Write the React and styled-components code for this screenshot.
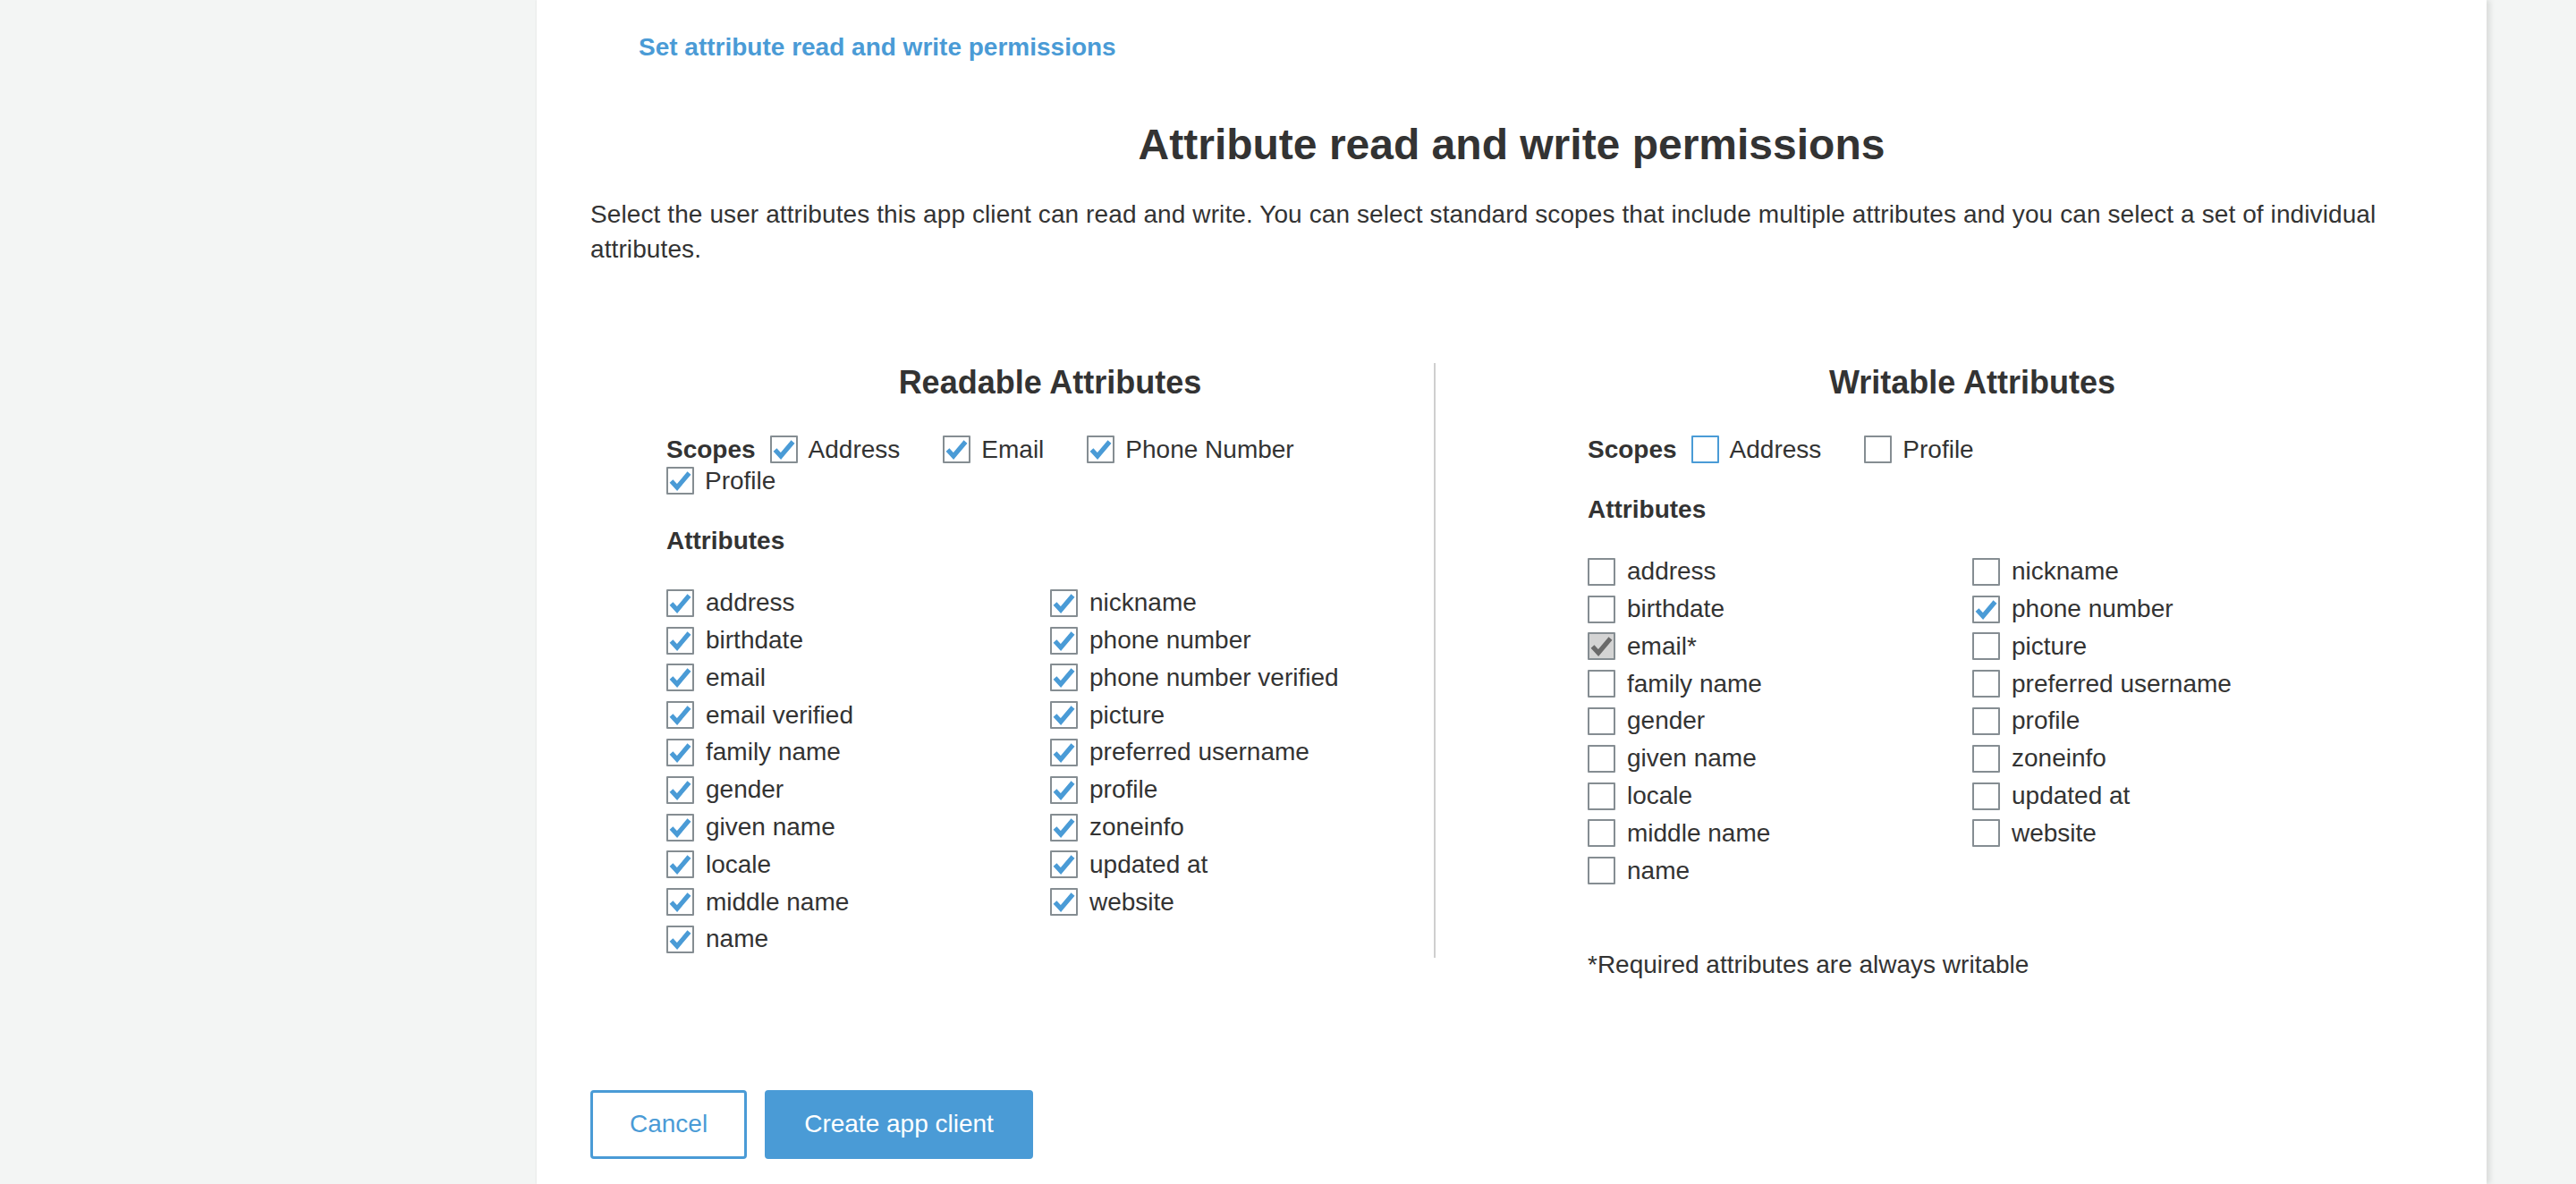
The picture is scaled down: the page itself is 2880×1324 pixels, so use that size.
import React from "react";
import styled, { createGlobalStyle, css } from "styled-components";

const GlobalStyle = createGlobalStyle`
  html, body {
    margin: 0;
    padding: 0;
    background: #f3f5f4;
    font-family: "Liberation Sans", Arial, Helvetica, sans-serif;
    color: #333;
  }
  body { overflow: hidden; }
  * { box-sizing: border-box; }
`;

const BLUE = "#4a9bd6";

const Page = styled.div`
  display: flex;
  min-height: 1324px;
  background: #f3f5f4;
`;

const Gutter = styled.aside`
  width: 600px;
  flex-shrink: 0;
`;

const Panel = styled.main`
  width: 2180px;
  flex-shrink: 0;
  min-height: 1324px;
  background: #fff;
  padding: 33px 60px 0;
  box-shadow: 4px 0 6px rgba(0, 0, 0, 0.1), -1px 0 2px rgba(0, 0, 0, 0.04);
`;

const StepLink = styled.a`
  display: block;
  padding-left: 54px;
  font-size: 28px;
  line-height: 40px;
  font-weight: 700;
  color: ${BLUE};
  text-decoration: none;
`;

const Title = styled.h1`
  margin: 61px 0 0;
  text-align: center;
  font-size: 48px;
  line-height: 56px;
  font-weight: 700;
  color: #333;
`;

const Description = styled.p`
  margin: 30px 0 0;
  font-size: 28px;
  line-height: 39.2px;
  letter-spacing: 0.1px;
`;

const Columns = styled.div`
  display: grid;
  grid-template-columns: 1fr 1fr;
  margin-top: 110px;
  align-items: start;
`;

const Column = styled.section`
  padding: 0 85px;
`;

const ColumnInner = styled.div`
  ${(p) =>
    p.$divider &&
    css`
      border-right: 2px solid #cfcfcf;
      margin-top: -2px;
      padding-top: 2px;
    `}
`;

const ColumnTitle = styled.h2`
  margin: 0;
  text-align: center;
  font-size: 36px;
  line-height: 40px;
  font-weight: 700;
`;

const ScopeRow = styled.div`
  display: flex;
  flex-wrap: wrap;
  align-items: center;
  margin-top: 37px;
`;

const ScopeLabel = styled.span`
  font-size: 28px;
  font-weight: 700;
  line-height: 35px;
  margin-right: 16px;
`;

const ScopeItem = styled.label`
  display: flex;
  align-items: center;
  gap: 12px;
  height: 35px;
  margin-right: 48px;
  font-size: 28px;
`;

const SubTitle = styled.h3`
  margin: 30px 0 0;
  font-size: 28px;
  line-height: 40px;
  font-weight: 700;
`;

const AttrGrid = styled.div`
  display: grid;
  grid-template-columns: 1fr 1fr;
  margin-top: 28px;
`;

const AttrList = styled.div`
  display: flex;
  flex-direction: column;
`;

const AttrRow = styled.label`
  display: flex;
  align-items: center;
  gap: 13px;
  height: 41.8px;
  font-size: 28px;
`;

const Box = styled.span`
  display: inline-flex;
  align-items: center;
  justify-content: center;
  width: 31px;
  height: 31px;
  flex-shrink: 0;
  border: 2px solid ${(p) => (p.$focused ? BLUE : "#858d92")};
  background: ${(p) => (p.$disabled ? "#d4d4d4" : "#fff")};
  border-radius: 1px;
`;

const Footnote = styled.p`
  margin: 64px 0 0;
  font-size: 28px;
  line-height: 40px;
`;

const Actions = styled.div`
  display: flex;
  gap: 20px;
  margin-top: 120px;
`;

const Button = styled.button`
  height: 77px;
  padding: 0 41px;
  border-radius: 4px;
  border: 3px solid ${BLUE};
  font-family: "Liberation Sans", Arial, sans-serif;
  font-size: 28px;
  cursor: pointer;
  ${(p) =>
    p.$primary
      ? css`
          background: ${BLUE};
          color: #fff;
        `
      : css`
          background: #fff;
          color: ${BLUE};
        `}
`;

function Checkbox({ checked, disabled, focused }) {
  return (
    <Box $disabled={disabled} $focused={focused}>
      {checked && (
        <svg width="27" height="27" viewBox="0 0 27 27">
          <path
            d="M3.5 14 L10 21 L23.5 5"
            fill="none"
            stroke={disabled ? "#6a6a6a" : BLUE}
            strokeWidth="5.2"
            strokeLinejoin="miter"
          />
        </svg>
      )}
    </Box>
  );
}

function Attr({ label, checked, disabled }) {
  return (
    <AttrRow>
      <Checkbox checked={checked} disabled={disabled} />
      <span>{label}</span>
    </AttrRow>
  );
}

function Scope({ label, checked, focused }) {
  return (
    <ScopeItem>
      <Checkbox checked={checked} focused={focused} />
      <span>{label}</span>
    </ScopeItem>
  );
}

const readLeft = [
  "address",
  "birthdate",
  "email",
  "email verified",
  "family name",
  "gender",
  "given name",
  "locale",
  "middle name",
  "name",
];
const readRight = [
  "nickname",
  "phone number",
  "phone number verified",
  "picture",
  "preferred username",
  "profile",
  "zoneinfo",
  "updated at",
  "website",
];
const writeLeft = [
  "address",
  "birthdate",
  "email*",
  "family name",
  "gender",
  "given name",
  "locale",
  "middle name",
  "name",
];
const writeRight = [
  "nickname",
  "phone number",
  "picture",
  "preferred username",
  "profile",
  "zoneinfo",
  "updated at",
  "website",
];

export default function App() {
  return (
    <>
      <GlobalStyle />
      <Page>
        <Gutter />
        <Panel>
          <StepLink href="#">Set attribute read and write permissions</StepLink>
          <Title>Attribute read and write permissions</Title>
          <Description>
            Select the user attributes this app client can read and write. You can select
            standard scopes that include multiple attributes and you can select a set of
            individual attributes.
          </Description>

          <Columns>
            <Column>
              <ColumnInner $divider>
                <ColumnTitle>Readable Attributes</ColumnTitle>
                <ScopeRow>
                  <ScopeLabel>Scopes</ScopeLabel>
                  <Scope label="Address" checked />
                  <Scope label="Email" checked />
                  <Scope label="Phone Number" checked />
                  <Scope label="Profile" checked />
                </ScopeRow>
                <SubTitle>Attributes</SubTitle>
                <AttrGrid>
                  <AttrList>
                    {readLeft.map((a) => (
                      <Attr key={a} label={a} checked />
                    ))}
                  </AttrList>
                  <AttrList>
                    {readRight.map((a) => (
                      <Attr key={a} label={a} checked />
                    ))}
                  </AttrList>
                </AttrGrid>
              </ColumnInner>
            </Column>

            <Column>
              <ColumnInner>
                <ColumnTitle>Writable Attributes</ColumnTitle>
                <ScopeRow>
                  <ScopeLabel>Scopes</ScopeLabel>
                  <Scope label="Address" focused />
                  <Scope label="Profile" />
                </ScopeRow>
                <SubTitle>Attributes</SubTitle>
                <AttrGrid>
                  <AttrList>
                    {writeLeft.map((a) => (
                      <Attr
                        key={a}
                        label={a}
                        checked={a === "email*"}
                        disabled={a === "email*"}
                      />
                    ))}
                  </AttrList>
                  <AttrList>
                    {writeRight.map((a) => (
                      <Attr key={a} label={a} checked={a === "phone number"} />
                    ))}
                  </AttrList>
                </AttrGrid>
                <Footnote>*Required attributes are always writable</Footnote>
              </ColumnInner>
            </Column>
          </Columns>

          <Actions>
            <Button>Cancel</Button>
            <Button $primary>Create app client</Button>
          </Actions>
        </Panel>
      </Page>
    </>
  );
}
